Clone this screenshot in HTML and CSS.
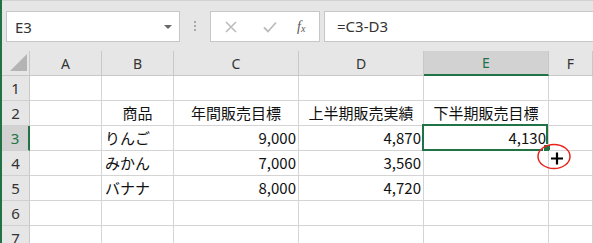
FILE: index.html
```html
<!DOCTYPE html>
<html lang="ja">
<head>
  <meta charset="UTF-8" />
  <title>Excel</title>
  <link rel="stylesheet" href="styles.css">
</head>
<body>
  <div class="app">
    <div class="toolbar">
      <div class="namebox">
        <span>E3</span>
        <span class="drop"></span>
      </div>
      <div class="dots"><i></i><i></i><i></i></div>
      <div class="fbuttons">
        <svg width="12" height="12" viewBox="0 0 12 12"><path d="M1 1L11 11M11 1L1 11" stroke="#bcbcbc" stroke-width="1.6" fill="none"/></svg>
        <svg width="14" height="12" viewBox="0 0 14 12"><path d="M1 6.5L5 10.5L13 1.5" stroke="#bcbcbc" stroke-width="1.8" fill="none"/></svg>
        <span class="fx">f<sub>x</sub></span>
      </div>
      <div class="formula">=C3-D3</div>
    </div>

    <div class="sheet">
      <div class="hd corner"><span class="tri"></span></div>
      <div class="hd col">A</div>
      <div class="hd col">B</div>
      <div class="hd col">C</div>
      <div class="hd col">D</div>
      <div class="hd col sel">E</div>
      <div class="hd col">F</div>

      <div class="hd row">1</div>
      <div class="c"></div><div class="c"></div><div class="c"></div><div class="c"></div><div class="c"></div><div class="c"></div>

      <div class="hd row">2</div>
      <div class="c"></div>
      <div class="c mid">商品</div>
      <div class="c mid">年間販売目標</div>
      <div class="c mid">上半期販売実績</div>
      <div class="c mid">下半期販売目標</div>
      <div class="c"></div>

      <div class="hd row sel">3</div>
      <div class="c"></div>
      <div class="c">りんご</div>
      <div class="c num">9,000</div>
      <div class="c num">4,870</div>
      <div class="c num active">4,130<span class="outline"></span><span class="handle"></span></div>
      <div class="c"></div>

      <div class="hd row">4</div>
      <div class="c"></div>
      <div class="c">みかん</div>
      <div class="c num">7,000</div>
      <div class="c num">3,560</div>
      <div class="c"></div>
      <div class="c"></div>

      <div class="hd row">5</div>
      <div class="c"></div>
      <div class="c">バナナ</div>
      <div class="c num">8,000</div>
      <div class="c num">4,720</div>
      <div class="c"></div>
      <div class="c"></div>

      <div class="hd row">6</div>
      <div class="c"></div><div class="c"></div><div class="c"></div><div class="c"></div><div class="c"></div><div class="c"></div>

      <div class="hd row">7</div>
      <div class="c"></div><div class="c"></div><div class="c"></div><div class="c"></div><div class="c"></div><div class="c"></div>
    </div>

    <svg class="mark" width="40" height="32" viewBox="0 0 40 32">
      <ellipse cx="18" cy="13.5" rx="16" ry="12" stroke="#e8231c" stroke-width="1.5" fill="none"/>
      <path d="M21 9.5V21.5M15 15.5H27" stroke="#000" stroke-width="2.2" fill="none"/>
    </svg>
  </div>
</body>
</html>
```

FILE: styles.css
```css
body {
  margin: 0;
  background: #fff;
  overflow: hidden;
}
.app {
  position: relative;
  width: 591px;
  height: 243px;
  border-left: 2px solid #217346;
  overflow: hidden;
  font-family: "Noto Sans", "Noto Sans CJK JP", sans-serif;
  color: #222;
}
.toolbar {
  height: 51px;
  border-top: 1px solid #d2d2d2;
  background: #e6e6e6;
  display: flex;
  align-items: flex-start;
  padding: 10px 0 0 4px;
  box-sizing: border-box;
}
.namebox {
  width: 174px;
  height: 31px;
  background: #fff;
  border: 1px solid #c6c6c6;
  box-sizing: border-box;
  display: flex;
  align-items: center;
  justify-content: space-between;
  padding: 0 7px 0 8px;
  font-size: 15px;
  color: #333;
}
.drop {
  width: 0;
  height: 0;
  border-left: 4px solid transparent;
  border-right: 4px solid transparent;
  border-top: 4px solid #666;
}
.dots {
  width: 30px;
  display: flex;
  flex-direction: column;
  align-items: center;
  gap: 2px;
  padding-top: 10px;
}
.dots i {
  width: 2px;
  height: 2px;
  background: #a8a8a8;
}
.fbuttons {
  width: 110px;
  height: 31px;
  background: #fff;
  border: 1px solid #c6c6c6;
  box-sizing: border-box;
  display: flex;
  align-items: center;
  padding-left: 14px;
  gap: 26px;
}
.fx {
  font-family: "Liberation Serif", serif;
  font-style: italic;
  font-size: 14px;
  color: #555;
  margin-left: -6px;
}
.fx sub {
  font-size: 10px;
  vertical-align: -1px;
}
.formula {
  flex: 1;
  height: 31px;
  margin-left: 4px;
  background: #fff;
  border: 1px solid #c6c6c6;
  border-right: none;
  box-sizing: border-box;
  padding-left: 12px;
  line-height: 28px;
  font-size: 15px;
  color: #333;
}
.sheet {
  display: grid;
  grid-template-columns: 28px 72px 72px 125px 125px 125px 1fr;
  grid-auto-rows: 25px;
}
.hd {
  background: #e6e6e6;
  box-sizing: border-box;
  border-right: 1px solid #c8c8c8;
  border-bottom: 1px solid #c8c8c8;
  display: flex;
  align-items: center;
  justify-content: center;
  font-size: 15px;
  color: #333;
}
.hd.col {
  font-size: 14px;
}
.hd.row {
  border-bottom-color: #d0d0d0;
}
.hd.sel {
  background: #d2d2d2;
  color: #217346;
}
.hd.col.sel {
  border-bottom: 2px solid #217346;
}
.hd.row.sel {
  border-right: 2px solid #217346;
}
.corner {
  position: relative;
}
.tri {
  position: absolute;
  right: 2px;
  bottom: 4px;
  width: 0;
  height: 0;
  border-left: 17px solid transparent;
  border-bottom: 17px solid #b4b4b4;
}
.c {
  position: relative;
  box-sizing: border-box;
  border-right: 1px solid #d4d4d4;
  border-bottom: 1px solid #d4d4d4;
  font-family: "Noto Sans CJK JP", sans-serif;
  font-size: 15px;
  line-height: 23px;
  padding: 0 3px;
  white-space: nowrap;
  color: #111;
}
.mid {
  text-align: center;
}
.num {
  text-align: right;
  padding-right: 2px;
}
.outline {
  position: absolute;
  left: -2px;
  top: -2px;
  right: 0;
  bottom: -1px;
  border: 2px solid #217346;
}
.handle {
  position: absolute;
  right: -3px;
  bottom: -2px;
  width: 6px;
  height: 6px;
  background: #217346;
  border: 1px solid #fff;
}
.mark {
  position: absolute;
  left: 534px;
  top: 143px;
}
```
